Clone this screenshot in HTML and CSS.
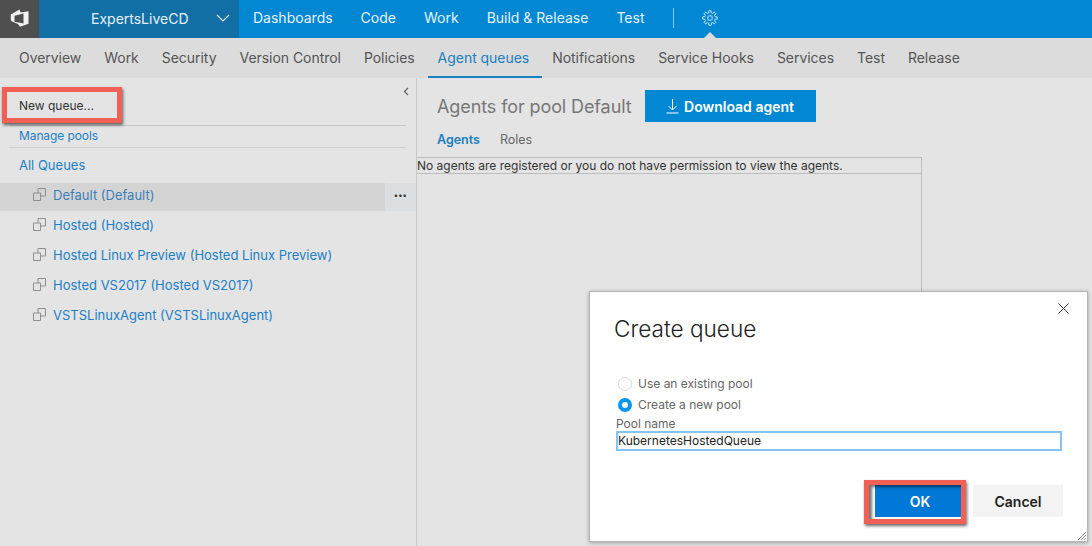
FILE: index.html
```html
<!DOCTYPE html>
<html lang="en">
    <head>
        <meta charset="UTF-8" />
        <title>Agent queues</title>
        <link rel="stylesheet" href="styles.css">
    </head>
    <body>
        <header class="topbar">
            <div class="logo">
                <svg width="20" height="20" viewBox="0 0 20 20"><path fill-rule="evenodd" d="M.8 5.500 9.500.5l1 3 8-1.200v12.400l-8.500 3-2-2.700-6-2.500-1.200-1.500zM4.500 6.800v6l9 1.700V4.500z" fill="#f2f2f2"/></svg>
            </div>
            <div class="project">
                <span>ExpertsLiveCD</span>
                <svg width="14" height="8" viewBox="0 0 14 8"><path d="M1 1l6 6 6-6" fill="none" stroke="#e6f2fa" stroke-width="1.100"/></svg>
            </div>
            <nav class="mainnav">
                <a>Dashboards</a>
                <a>Code</a>
                <a>Work</a>
                <a>Build &amp; Release</a>
                <a>Test</a>
            </nav>
            <span class="divider"></span>
            <div class="gear">
                <svg width="16" height="16" viewBox="0 0 16 16">
                    <defs><path id="tooth" d="M6.720 2.860 6.860.79H9.140L9.280 2.860 10.730 3.460"/></defs>
                    <circle cx="8" cy="8" r="2.400"/>
                    <use href="#tooth"/>
                    <use href="#tooth" transform="rotate(45 8 8)"/>
                    <use href="#tooth" transform="rotate(90 8 8)"/>
                    <use href="#tooth" transform="rotate(135 8 8)"/>
                    <use href="#tooth" transform="rotate(180 8 8)"/>
                    <use href="#tooth" transform="rotate(225 8 8)"/>
                    <use href="#tooth" transform="rotate(270 8 8)"/>
                    <use href="#tooth" transform="rotate(315 8 8)"/>
                </svg>
            </div>
        </header>
        <nav class="subnav">
            <a>Overview</a>
            <a>Work</a>
            <a>Security</a>
            <a>Version Control</a>
            <a>Policies</a>
            <a class="active">Agent queues</a>
            <a>Notifications</a>
            <a>Service Hooks</a>
            <a>Services</a>
            <a>Test</a>
            <a>Release</a>
        </nav>
        <main class="content">
            <aside class="sidebar">
                <div class="collapse">
                    <svg width="6" height="9" viewBox="0 0 6 9"><path d="M5 1 1.500 4.500 5 8" fill="none" stroke="#666" stroke-width="1.200"/></svg>
                </div>
                <div class="side-action">New queue...</div>
                <div class="side-link">Manage pools</div>
                <div class="all-queues">All Queues</div>
                <ul class="queues">
                    <li class="selected">
                        <svg class="q-icon" width="13" height="13" viewBox="0 0 13 13"><path d="M.5 5h7v7.500h-7zM5 5V.5h7.500V8H7.500" fill="none" stroke="#8f8f8f"/></svg>
                        <span>Default (Default)</span>
                        <b class="more">•••</b>
                    </li>
                    <li>
                        <svg class="q-icon" width="13" height="13" viewBox="0 0 13 13"><path d="M.5 5h7v7.500h-7zM5 5V.5h7.500V8H7.500" fill="none" stroke="#8f8f8f"/></svg>
                        <span>Hosted (Hosted)</span>
                    </li>
                    <li>
                        <svg class="q-icon" width="13" height="13" viewBox="0 0 13 13"><path d="M.5 5h7v7.500h-7zM5 5V.5h7.500V8H7.500" fill="none" stroke="#8f8f8f"/></svg>
                        <span>Hosted Linux Preview (Hosted Linux Preview)</span>
                    </li>
                    <li>
                        <svg class="q-icon" width="13" height="13" viewBox="0 0 13 13"><path d="M.5 5h7v7.500h-7zM5 5V.5h7.500V8H7.500" fill="none" stroke="#8f8f8f"/></svg>
                        <span>Hosted VS2017 (Hosted VS2017)</span>
                    </li>
                    <li>
                        <svg class="q-icon" width="13" height="13" viewBox="0 0 13 13"><path d="M.5 5h7v7.500h-7zM5 5V.5h7.500V8H7.500" fill="none" stroke="#8f8f8f"/></svg>
                        <span>VSTSLinuxAgent (VSTSLinuxAgent)</span>
                    </li>
                </ul>
            </aside>
            <section class="pane">
                <div class="pane-head">
                    <h1>Agents for pool Default</h1>
                    <button class="download">
                        <svg width="13" height="16" viewBox="0 0 13 16"><path d="M6.500 1v11M2.500 8l4 4 4-4M.5 15h12" fill="none" stroke="#fff"/></svg>
                        Download agent
                    </button>
                </div>
                <div class="tabs">
                    <a class="on">Agents</a>
                    <a>Roles</a>
                </div>
                <div class="grid">
                    <div class="grid-msg">No agents are registered or you do not have permission to view the agents.</div>
                </div>
            </section>
        </main>

        <div class="note note-new"></div>

        <div class="dialog">
            <svg class="close" width="11" height="11" viewBox="0 0 11 11"><path d="M.5.5l10 10M10.500.5l-10 10" stroke="#333" fill="none"/></svg>
            <h2>Create queue</h2>
            <div class="radios">
                <div class="radio"><i class="dot"></i>Use an existing pool</div>
                <div class="radio"><i class="dot checked"></i>Create a new pool</div>
            </div>
            <div class="field-label">Pool name</div>
            <div class="field">KubernetesHostedQueue</div>
            <div class="actions">
                <button class="ok">OK</button>
                <button class="cancel">Cancel</button>
            </div>
            <svg class="grip" width="12" height="12" viewBox="0 0 12 12"><path d="M11 3l-8 8M11 6l-5 5M11 9l-2 2" stroke="#888" fill="none"/></svg>
        </div>
    </body>
</html>
```
FILE: styles.css
```css
* {
    box-sizing: border-box;
    margin: 0;
    padding: 0;
}
html,
body {
    width: 1092px;
    height: 546px;
    overflow: hidden;
}
body {
    position: relative;
    display: flex;
    flex-direction: column;
    background: #e4e4e4;
    font-family: Inter, "Liberation Sans", sans-serif;
    font-size: 13px;
    color: #444;
}
.topbar {
    display: flex;
    align-items: center;
    height: 38px;
    flex: none;
    background: #0288d2;
    color: #e6f2fa;
}
.logo {
    display: flex;
    align-items: center;
    justify-content: center;
    width: 39px;
    height: 100%;
    background: #4f4f4f;
}
.project {
    display: flex;
    align-items: center;
    width: 200px;
    height: 100%;
    padding: 0 0 2px 52px;
    background: #126fa6;
    font-size: 14px;
}
.project svg {
    margin-left: 27px;
}
.mainnav {
    display: flex;
    gap: 28px;
    margin: 0 0 3px 14px;
    font-size: 14px;
}
.divider {
    width: 1px;
    height: 20px;
    margin: 0 0 2px 29px;
    background: #8cc6e8;
}
.gear {
    position: relative;
    display: flex;
    align-items: center;
    align-self: stretch;
    margin-left: 28px;
    padding-bottom: 3px;
}
.gear svg {
    fill: none;
    stroke: #d5ebf8;
    stroke-width: 0.9;
}
.gear::after {
    content: "";
    position: absolute;
    left: 2px;
    bottom: 0;
    border: 6px solid transparent;
    border-top: 0;
    border-bottom-color: #dcdcdc;
}
.subnav {
    display: flex;
    gap: 23px;
    height: 40px;
    flex: none;
    padding-left: 19px;
    background: #dcdcdc;
    font-size: 14px;
    letter-spacing: -0.04px;
    color: #555;
}
.subnav a {
    line-height: 40px;
}
.subnav .active {
    margin: 0 -13px 0 -10px;
    padding: 0 13px 0 10px;
    color: #1a7fbf;
    border-bottom: 2px solid #1a7fbf;
}
.content {
    display: flex;
    flex: 1;
}
.sidebar {
    position: relative;
    width: 417px;
    flex: none;
    padding-top: 12px;
    border-right: 1px solid #c8c8c8;
    color: #1b80c6;
}
.collapse {
    position: absolute;
    top: 5px;
    right: 7px;
}
.side-action {
    height: 36px;
    margin: 0 10px 0 9px;
    padding: 8px 0 0 10px;
    font-size: 12px;
    color: #333;
    border-bottom: 1px solid #c8c8c8;
}
.side-link {
    height: 22px;
    margin: 0 10px 0 9px;
    padding: 2px 0 0 10px;
    font-size: 12px;
    letter-spacing: -0.1px;
    border-bottom: 1px solid #d0d0d0;
}
.all-queues {
    padding: 9px 0 0 19px;
    height: 35px;
}
.queues {
    list-style: none;
}
.queues li {
    position: relative;
    display: flex;
    align-items: center;
    height: 28px;
    margin-bottom: 2px;
    padding: 0 0 5px 33px;
}
.q-icon {
    margin-right: 7px;
}
.selected {
    background: linear-gradient(to right, #d4d4d4 385px, #dcdfe2 385px);
    color: #3b7fb6;
}
.more {
    position: absolute;
    right: 9px;
    font-size: 8px;
    letter-spacing: 0.5px;
    color: #333;
}
.pane {
    flex: 1;
}
.pane-head {
    display: flex;
    align-items: center;
    gap: 13px;
    height: 32px;
    margin: 12px 0 0 20px;
}
.pane-head h1 {
    font-size: 18px;
    font-weight: 400;
    letter-spacing: -0.1px;
    color: #777;
}
.download {
    display: flex;
    align-items: center;
    justify-content: center;
    gap: 5px;
    width: 171px;
    height: 32px;
    border: 0;
    background: #0288d2;
    color: #fff;
    font: 600 14px Inter, "Liberation Sans", sans-serif;
}
.tabs {
    display: flex;
    gap: 20px;
    margin: 10px 0 0 20px;
    font-size: 12.500px;
    color: #666;
}
.tabs .on {
    font-weight: 600;
    color: #1b7cc0;
}
.grid {
    width: 505px;
    height: 150px;
    margin-top: 10px;
    border-top: 1px solid #bdbdbd;
    border-right: 1px solid #bdbdbd;
}
.grid-msg {
    height: 16px;
    font-size: 12px;
    line-height: 15px;
    color: #333;
    border-bottom: 1px solid #bdbdbd;
}
.dialog {
    position: absolute;
    left: 589px;
    top: 291px;
    width: 499px;
    height: 251px;
    padding: 23px 24px 0 24px;
    background: #fff;
    border: 1px solid #b5b5b5;
    box-shadow: 0 1px 4px rgba(0, 0, 0, 0.3);
}
.close {
    position: absolute;
    top: 11px;
    right: 18px;
}
.dialog h2 {
    font-size: 22.600px;
    font-weight: 300;
    line-height: 28px;
    color: #222;
}
.radios {
    display: flex;
    flex-direction: column;
    gap: 7px;
    margin: 34px 0 0 4px;
    color: #666;
    font-size: 12px;
}
.radio {
    display: flex;
    align-items: center;
    gap: 6px;
    height: 14px;
    line-height: 14px;
}
.dot {
    width: 14px;
    height: 14px;
    border: 1px solid #d8d8d8;
    border-radius: 50%;
    background: #fff;
}
.dot.checked {
    border: 4.500px solid #0a96f0;
}
.field-label {
    margin: 5px 0 0 2px;
    font-size: 12px;
    line-height: 14px;
    color: #666;
}
.field {
    height: 20px;
    margin: 0 1px 0 2px;
    border: 2px solid #86c3f2;
    font-size: 12px;
    line-height: 16px;
    color: #222;
}
.actions {
    display: flex;
    justify-content: flex-end;
    gap: 12px;
    margin-top: 34px;
}
.actions button {
    height: 32px;
    border: 0;
    font: 600 14px Inter, "Liberation Sans", sans-serif;
}
.actions .ok {
    position: relative;
    width: 86px;
    padding-left: 4px;
    background: #0078d7;
    color: #fff;
}
.ok::after {
    content: "";
    position: absolute;
    inset: -5px -5px -7px -11px;
    border: 5px solid #f06055;
    box-shadow: 1px 2px 3px rgba(0, 0, 0, 0.6), inset 3px 2px 3px rgba(0, 0, 0, 0.55);
}
.cancel {
    width: 90px;
    background: #f3f3f3;
    color: #222;
}
.grip {
    position: absolute;
    right: 0;
    bottom: 0;
}
.note-new {
    position: absolute;
    left: 2px;
    top: 87px;
    width: 120px;
    height: 36px;
    border: 5px solid #f06055;
    box-shadow: 1px 2px 3px rgba(0, 0, 0, 0.6);
}
```
